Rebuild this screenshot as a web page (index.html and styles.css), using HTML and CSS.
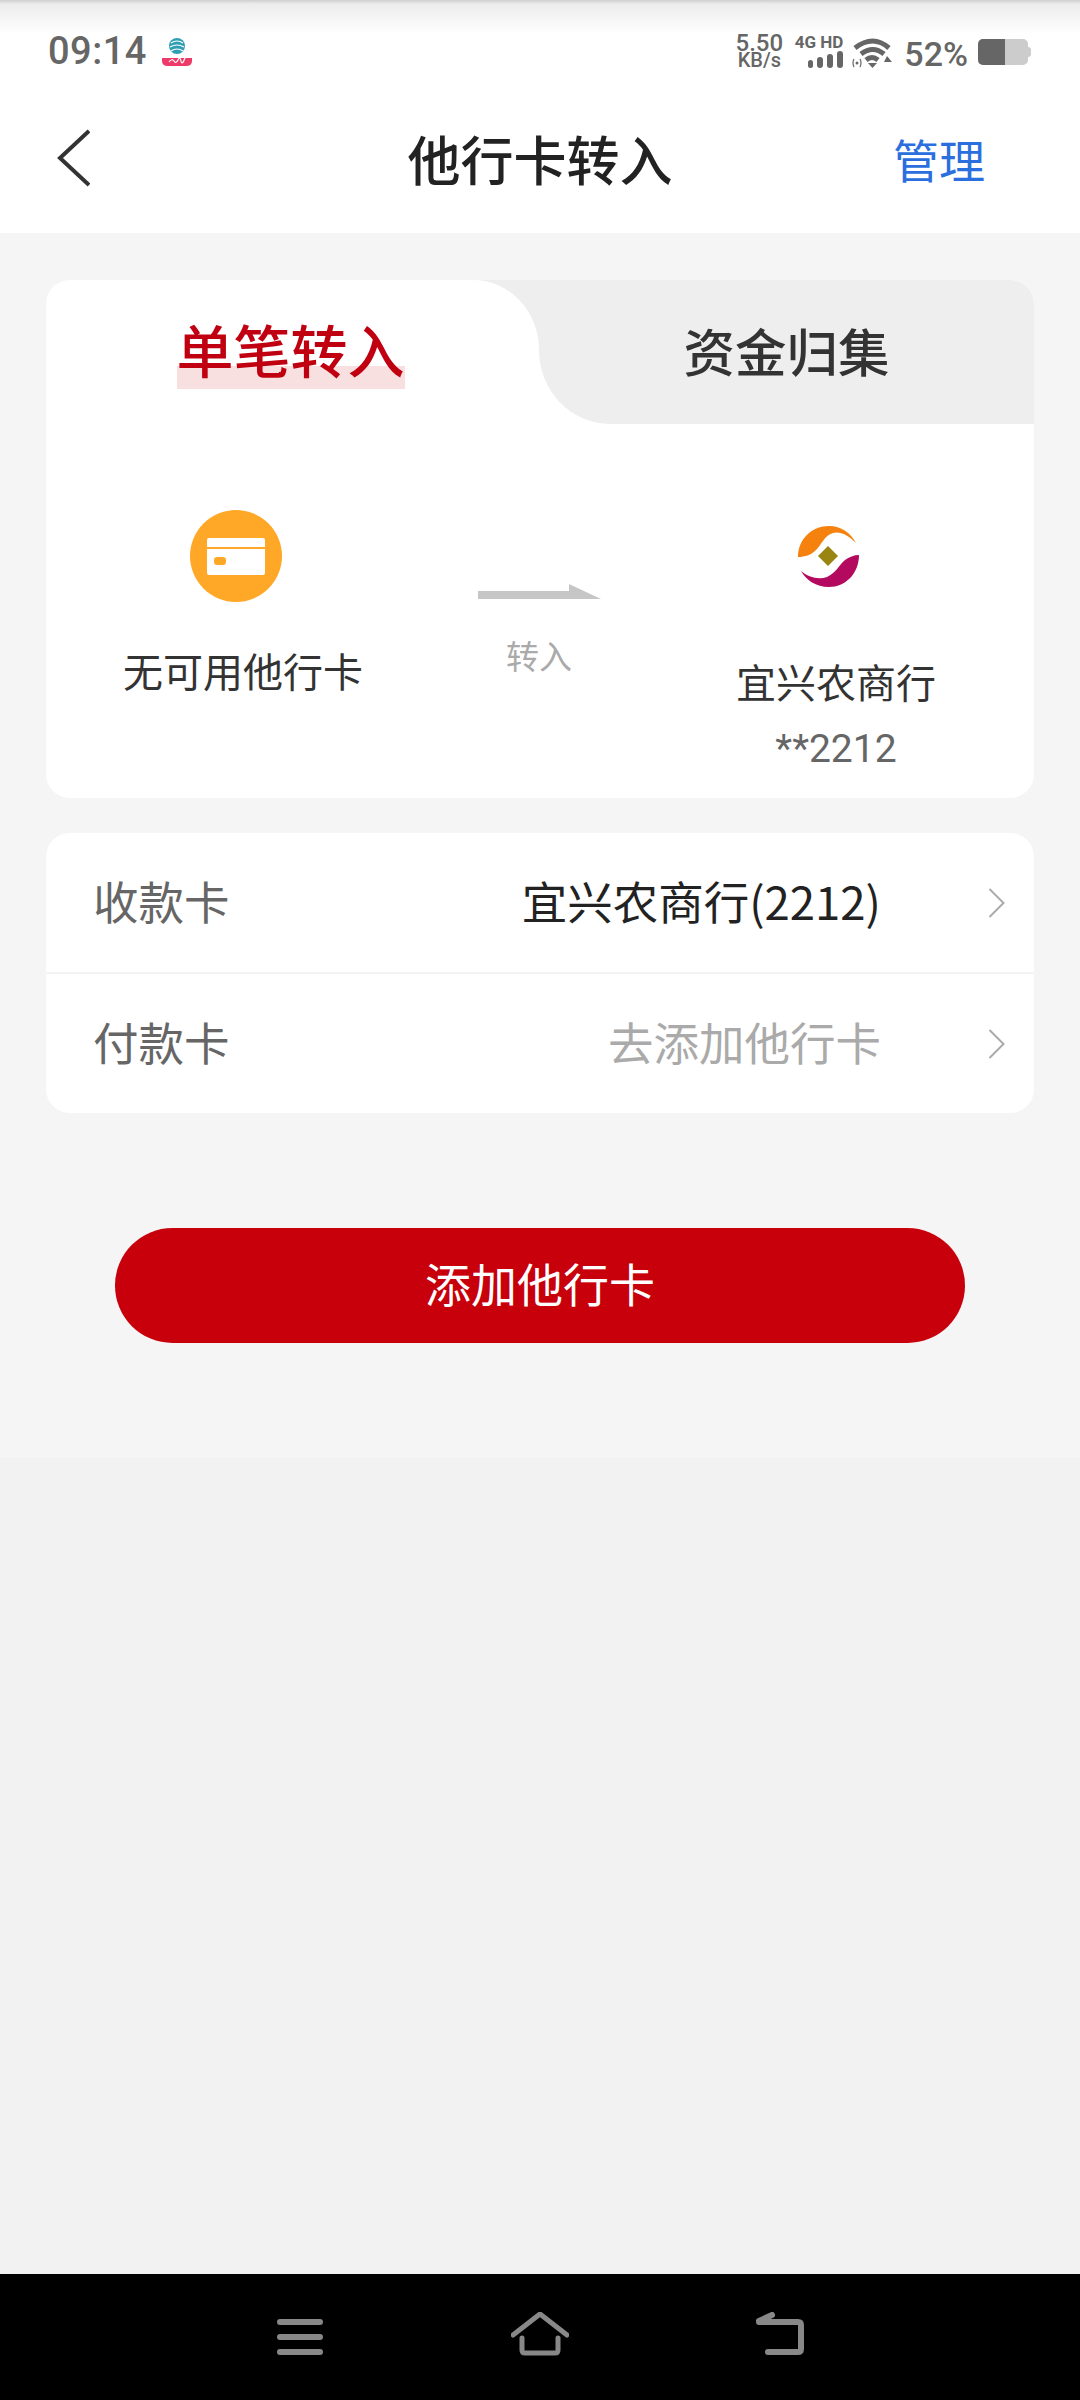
FILE: index.html
```html
<!DOCTYPE html>
<html lang="zh-CN">
<head>
    <meta charset="utf-8">
    <title>他行卡转入</title>
    <link rel="stylesheet" href="styles.css">
</head>
<body>
    <div class="phone">
        <!-- status bar -->
        <div class="status-bar">
            <div class="status-left">
                <span class="clock">09:14</span>
                <svg class="carrier" width="32" height="30" viewBox="0 0 32 30">
                    <circle cx="16" cy="9" r="8" fill="#2f9fb5"/>
                    <path d="M10 6q6 -4 12 0M9 10q7 -4 14 0M10 14q6 -4 12 0" fill="none" stroke="#fff" stroke-width="1.2"/>
                    <path d="M1 21h30v3q0 5 -6 5h-18q-6 0 -6 -5z" fill="#ee3a68"/>
                    <path d="M8 25q3 -4 5 -1t4 -1t3 1t4 -3" fill="none" stroke="#fff" stroke-width="1.2"/>
                </svg>
            </div>
            <div class="status-right">
                <div class="net-speed">
                    <span class="speed-num">5.50</span>
                    <span class="speed-unit">KB/s</span>
                </div>
                <div class="signal">
                    <span class="signal-label">4G HD</span>
                    <svg width="36" height="17" viewBox="0 0 36 17">
                        <rect x="1" y="9" width="5" height="8" rx="2.5" fill="#666"/>
                        <rect x="10" y="6" width="6" height="11" rx="3" fill="#666"/>
                        <rect x="20" y="3" width="6" height="14" rx="3" fill="#666"/>
                        <rect x="30" y="0" width="6" height="17" rx="3" fill="#666"/>
                    </svg>
                </div>
                <svg class="wifi" width="40" height="31" viewBox="0 0 40 31">
                    <path d="M3 11q18 -14 34 0M9 17q12 -9 23 0M14 23q6 -5 12 0" fill="none" stroke="#666" stroke-width="5"/>
                    <path d="M16 26h9l-4.500 5z" fill="#666"/>
                    <path d="M35 19l5 6h-8z" fill="#666"/>
                    <circle cx="5" cy="26" r="1.500" fill="#666"/>
                    <path d="M2 22q-2 4 0 8M8 22q2 4 0 8" fill="none" stroke="#666" stroke-width="1.200"/>
                </svg>
                <span class="battery-text">52%</span>
                <div class="battery">
                    <div class="battery-level"></div>
                </div>
            </div>
        </div>

        <!-- title bar -->
        <div class="nav-bar">
            <svg class="back-icon" width="34" height="58" viewBox="0 0 34 58">
                <path d="M33 2L4 29l29 27" fill="none" stroke="#333" stroke-width="4"/>
            </svg>
            <div class="nav-title">他行卡转入</div>
            <div class="nav-action">管理</div>
        </div>

        <div class="content">
            <div class="card transfer-card">
                <div class="tabs">
                    <div class="tab tab-active"><span class="tab-mark">单笔转入</span></div>
                    <div class="tab tab-other">资金归集</div>
                </div>
                <div class="transfer-row">
                    <div class="from-col">
                        <div class="card-circle">
                            <svg width="58" height="37" viewBox="0 0 58 37">
                                <rect width="58" height="37" rx="2" fill="#fff"/>
                                <rect y="9" width="58" height="2" fill="#ffa726"/>
                                <rect x="7" y="19" width="12" height="8" rx="3" fill="#ffa726"/>
                            </svg>
                        </div>
                        <div class="col-text">无可用他行卡</div>
                    </div>
                    <div class="arrow-col">
                        <svg width="123" height="15" viewBox="0 0 123 15">
                            <path d="M0 7h91V0l32 15H0z" fill="#c6c6c6"/>
                        </svg>
                        <div class="arrow-label">转入</div>
                    </div>
                    <div class="to-col">
                        <svg class="bank-logo" width="61" height="61" viewBox="0 0 61 61">
                            <path d="M0 31C0 13 14 0 31 0c12 0 22 7 27 17C50 9 42 5 35 7 26 10 24 18 18 24 13 29 7 31 0 31z" fill="#f5820f"/>
                            <path d="M61 29C61 48 47 61 31 61 18 61 8 54 3 45c7 6 17 9 26 6 9-4 12-12 18-17 4-3 9-5 14-5z" fill="#b3095e"/>
                            <path d="M30 20l10 10-10 10-10-10z" fill="#9a8412"/>
                        </svg>
                        <div class="col-text bank-name">宜兴农商行</div>
                        <div class="card-tail">**2212</div>
                    </div>
                </div>
            </div>

            <div class="card list-card">
                <div class="list-row">
                    <span class="row-label">收款卡</span>
                    <span class="row-value">宜兴农商行(2212)</span>
                    <svg class="row-arrow" width="18" height="30" viewBox="0 0 18 30">
                        <path d="M1.500 1l14 14-14 14" fill="none" stroke="#aaa" stroke-width="2"/>
                    </svg>
                </div>
                <div class="list-row">
                    <span class="row-label">付款卡</span>
                    <span class="row-value row-empty">去添加他行卡</span>
                    <svg class="row-arrow" width="18" height="30" viewBox="0 0 18 30">
                        <path d="M1.500 1l14 14-14 14" fill="none" stroke="#aaa" stroke-width="2"/>
                    </svg>
                </div>
            </div>

            <button class="add-button">添加他行卡</button>
        </div>

        <div class="empty-area"></div>

        <!-- android buttons -->
        <div class="bottom-bar">
            <svg class="menu-icon" width="46" height="36" viewBox="0 0 46 36">
                <path d="M3 3h40M3 18h40M3 33h40" fill="none" stroke="#888" stroke-width="6" stroke-linecap="round"/>
            </svg>
            <svg width="58" height="44" viewBox="0 0 58 44">
                <path d="M2 23L29 2l27 21" fill="none" stroke="#888" stroke-width="5" stroke-linecap="round" stroke-linejoin="round"/>
                <path d="M11 26v12q0 3 3 3h30q3 0 3-3V26" fill="none" stroke="#888" stroke-width="5" stroke-linecap="round"/>
            </svg>
            <svg width="48" height="43" viewBox="0 0 48 43">
                <path d="M3 10h39q3 0 3 3v24q0 3-3 3H12" fill="none" stroke="#888" stroke-width="6" stroke-linecap="round"/>
                <path d="M3 9l13-6" fill="none" stroke="#888" stroke-width="6" stroke-linecap="round"/>
            </svg>
        </div>
    </div>
</body>
</html>
```

FILE: styles.css
```css
/* page */
body {
    margin: 0;
    padding: 0;
    background-color: #000;
    font-family: "Noto Sans CJK SC", Roboto, sans-serif;
}

.phone {
    width: 1080px;
    height: 2400px;
    display: flex;
    flex-direction: column;
    overflow: hidden;
}

/* status bar */
.status-bar {
    height: 85px;
    box-sizing: border-box;
    padding: 33px 48px 0 48px;
    display: flex;
    justify-content: space-between;
    align-items: flex-start;
    background: linear-gradient(#cfcfcf 0, #ececec 4px, #fff 34px);
    color: #666;
    font-family: Roboto, sans-serif;
}

.status-left {
    display: flex;
    align-items: center;
    height: 36px;
}

.clock {
    font-size: 38px;
    font-weight: 500;
    letter-spacing: 0.5px;
}

.carrier {
    margin-left: 14px;
    margin-top: 2px;
}

.status-right {
    display: flex;
    align-items: flex-start;
}

.net-speed {
    display: flex;
    flex-direction: column;
    align-items: center;
    width: 48px;
}

.speed-num {
    font-size: 24px;
    font-weight: 500;
    line-height: 20px;
}

.speed-unit {
    font-size: 20px;
    font-weight: 500;
    line-height: 15px;
}

.signal {
    display: flex;
    flex-direction: column;
    align-items: flex-end;
    margin-left: 12px;
    width: 48px;
}

.signal-label {
    font-size: 17px;
    font-weight: 700;
    line-height: 18px;
    white-space: nowrap;
}

.wifi {
    margin-left: 9px;
    margin-top: 4px;
}

.battery-text {
    font-size: 34px;
    font-weight: 500;
    line-height: 38px;
    margin-left: 12px;
    margin-top: 2px;
}

.battery {
    width: 50px;
    height: 26px;
    margin-left: 10px;
    margin-right: 4px;
    margin-top: 6px;
    border-radius: 5px;
    background-color: #ccc;
    position: relative;
}

/* battery nub */
.battery::after {
    content: "";
    position: absolute;
    left: 50px;
    top: 8px;
    width: 3px;
    height: 10px;
    border-radius: 0 3px 3px 0;
    background-color: #ccc;
}

.battery-level {
    width: 27px;
    height: 100%;
    border-radius: 5px 0 0 5px;
    background-color: #666;
}

/* title bar */
.nav-bar {
    height: 148px;
    flex-shrink: 0;
    box-sizing: border-box;
    display: grid;
    grid-template-columns: 1fr auto 1fr;
    align-items: center;
    padding: 0 95px 3px 56px;
    background-color: #fff;
}

.nav-title {
    font-size: 53px;
    font-weight: 500;
    color: #222;
    margin-left: 39px;
}

.nav-action {
    justify-self: end;
    font-size: 46px;
    color: #2b6fdf;
}

/* main part */
.content {
    height: 1225px;
    flex-shrink: 0;
    box-sizing: border-box;
    padding: 47px 46px 0 46px;
    background-color: #f5f5f5;
}

.card {
    background-color: #fff;
    border-radius: 24px;
    overflow: hidden;
}

.tabs {
    display: flex;
    height: 144px;
    background: linear-gradient(90deg, #eee 493px, #fff 493px);
}

.tab {
    display: flex;
    justify-content: center;
}

.tab-active {
    width: 493px;
    background-color: #fff;
    border-top-right-radius: 66px 70px;
    font-size: 57px;
    font-weight: 500;
    color: #c00010;
}

.tab-mark {
    height: 70px;
    margin-top: 39px;
    line-height: 58px;
    align-self: flex-start;
    background: linear-gradient(transparent 47px, #f8dfe0 47px);
    padding: 0;
    margin-left: -4px;
    white-space: nowrap;
}

.tab-other {
    flex: 1;
    background-color: #eee;
    border-bottom-left-radius: 71px 74px;
    font-size: 51.5px;
    font-weight: 500;
    color: #333;
    line-height: 140px;
}

.transfer-row {
    display: flex;
    height: 374px;
}

.from-col {
    width: 394px;
    padding-top: 86px;
    box-sizing: border-box;
    text-align: center;
}

.card-circle {
    width: 92px;
    height: 92px;
    margin: 0 auto;
    position: relative;
    left: -7px;
    border-radius: 50%;
    background-color: #ffa726;
    display: flex;
    justify-content: center;
    align-items: center;
}

.col-text {
    margin-top: 43px;
    font-size: 40px;
    line-height: 50px;
    color: #333;
}

.arrow-col {
    width: 198px;
    padding-top: 160px;
    box-sizing: border-box;
    text-align: center;
}

.arrow-col svg {
    display: block;
    margin: 0 auto;
}

.arrow-label {
    margin-top: 33px;
    font-size: 33px;
    line-height: 46px;
    color: #aaa;
}

.to-col {
    flex: 1;
    padding-top: 102px;
    box-sizing: border-box;
    text-align: center;
}

.bank-logo {
    display: block;
    margin: 0 auto;
    position: relative;
    left: -8px;
}

.bank-name {
    margin-top: 69px;
}

.card-tail {
    margin-top: 18px;
    font-family: Roboto, sans-serif;
    font-size: 39px;
    line-height: 50px;
    color: #666;
}

/* receive / pay rows */
.list-card {
    margin-top: 35px;
}

.list-row {
    height: 139px;
    box-sizing: border-box;
    display: flex;
    align-items: center;
    padding: 0 28px 5px 47px;
    font-size: 45.5px;
}

.list-row + .list-row {
    height: 141px;
    border-top: 2px solid #f3f3f3;
}

.row-label {
    color: #666;
}

.row-value {
    margin-left: auto;
    color: #222;
}

.row-empty {
    color: #aaa;
}

.row-arrow {
    margin-left: 107px;
    position: relative;
    top: 3px;
}

.add-button {
    display: block;
    width: 850px;
    height: 115px;
    margin: 115px 0 0 69px;
    padding: 0 0 8px 0;
    border: none;
    border-radius: 58px;
    background-color: #c7000b;
    color: #fff;
    font-family: inherit;
    font-size: 46px;
}

.empty-area {
    flex: 1;
    background-color: #f2f2f2;
}

.bottom-bar {
    height: 126px;
    flex-shrink: 0;
    box-sizing: border-box;
    padding: 38px 276px 0 277px;
    display: flex;
    justify-content: space-between;
    align-items: flex-start;
    background-color: #000;
}

.menu-icon {
    margin-top: 7px;
}
```
